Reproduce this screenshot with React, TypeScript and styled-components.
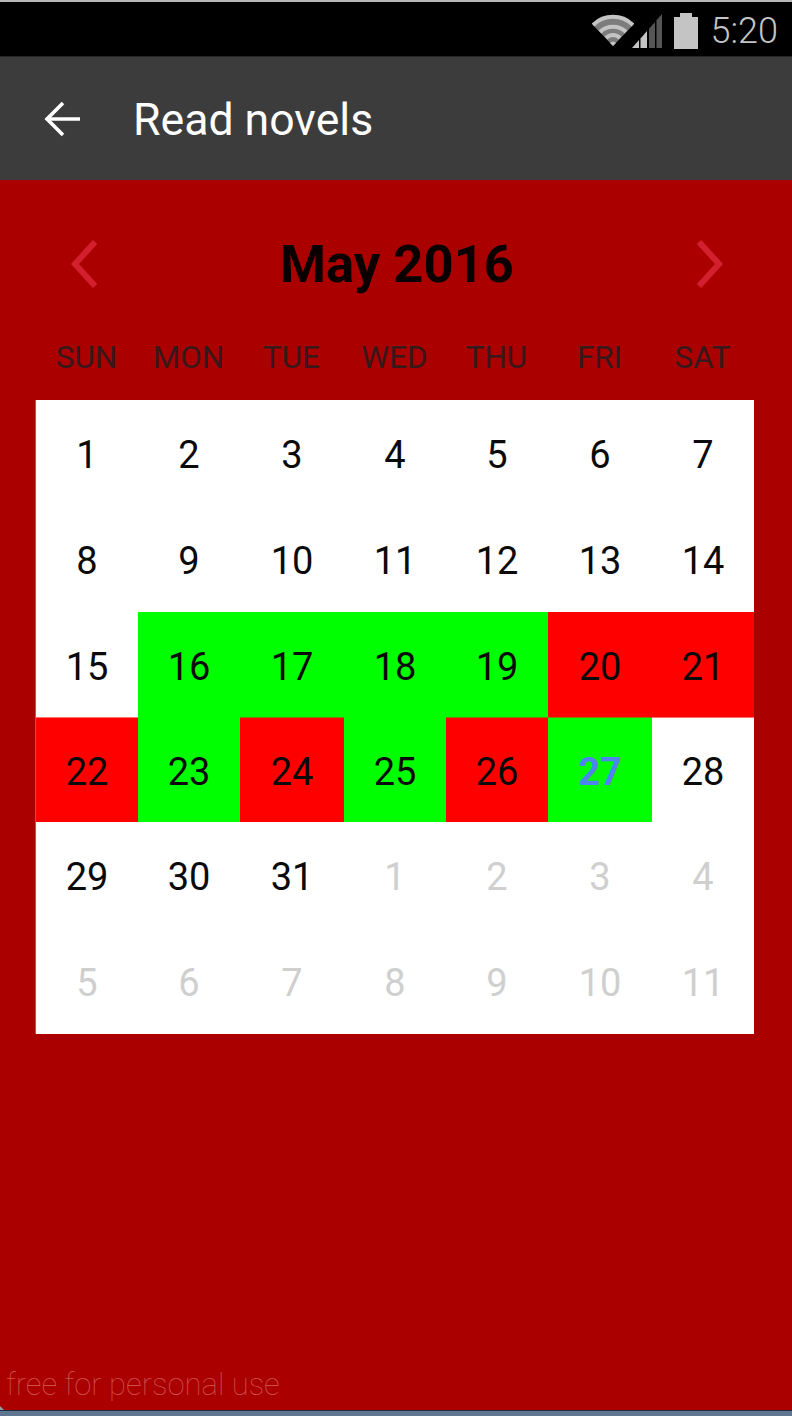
import React from "react";
import styled, { createGlobalStyle } from "styled-components";

const Global = createGlobalStyle`
  html, body { margin: 0; padding: 0; background: #a00; }
  body { font-family: Roboto, "Liberation Sans", sans-serif; }
`;

const Screen = styled.div`
  width: 792px;
  height: 1416px;
  display: flex;
  flex-direction: column;
  background: #aa0000;
  overflow: hidden;
`;

const StatusBar = styled.div`
  height: 54px;
  border-top: 2px solid #b8b8b8;
  border-bottom: 1px solid #262626;
  background: #000;
  display: flex;
  align-items: center;
  justify-content: flex-end;
  padding-right: 14px;
`;

const Clock = styled.span`
  font-size: 36px;
  font-weight: 300;
  color: #c4c4c4;
  margin-left: 13px;
  line-height: 54px;
  position: relative;
  top: 2px;
`;

const AppBar = styled.div`
  height: 123px;
  background: #3c3c3c;
  display: flex;
  align-items: center;
  padding-left: 44px;
  gap: 53px;
  color: #fff;
`;

const AppTitle = styled.span`
  font-size: 44.6px;
  font-weight: 400;
  color: #fff;
  padding-top: 2px;
`;

const Body = styled.div`
  flex: 1;
  display: flex;
  flex-direction: column;
  padding: 0 38px 0 36px;
  position: relative;
`;

const MonthRow = styled.div`
  height: 168px;
  display: flex;
  align-items: center;
  justify-content: space-between;
  padding: 0 31px 0 35px;
  box-sizing: border-box;
`;

const MonthTitle = styled.h1`
  margin: 0;
  font-family: Roboto, "Liberation Sans", sans-serif;
  font-size: 52.6px;
  font-weight: 700;
  color: #0a0000;
`;

const columns = "102px 102px 104px 102px 102px 104px 102px";

const WeekRow = styled.div`
  display: grid;
  grid-template-columns: ${columns};
  height: 52px;
`;

const WeekDay = styled.span`
  text-align: center;
  font-size: 31.4px;
  line-height: 20px;
  padding-right: 1px;
  color: #38181a;
  font-weight: 400;
`;

const Grid = styled.div`
  display: grid;
  grid-template-columns: ${columns};
  grid-template-rows: 106px 106px 105px 105px 106px 106px;
  height: 634px;
  background: #fff;
  box-shadow: -1px 0 0 #c94a4a;
`;

type Kind = "plain" | "muted" | "good" | "bad" | "today";

const Cell = styled.div<{ $kind: Kind; $seam?: string }>`
  display: flex;
  align-items: center;
  justify-content: center;
  font-size: 38px;
  padding-top: 4px;
  box-sizing: border-box;
  font-weight: ${(p) => (p.$kind === "today" ? 700 : 400)};
  color: ${(p) =>
    p.$kind === "muted" ? "#cfcfcf" : p.$kind === "today" ? "#4f83f0" : "#0a0a0a"};
  background: ${(p) =>
    p.$kind === "good" || p.$kind === "today"
      ? "#00ff00"
      : p.$kind === "bad"
        ? "#ff0000"
        : "#ffffff"};
  box-shadow: ${(p) => (p.$seam ? `inset 0 1px 0 ${p.$seam}` : "none")};
`;

const Watermark = styled.div`
  position: absolute;
  left: 6px;
  bottom: 13px;
  font-size: 31px;
  font-weight: 100;
  color: #dc6a6a;
  opacity: 0.75;
`;

const BottomEdge = styled.div`
  position: absolute;
  left: 0;
  right: 0;
  bottom: 0;
  height: 6px;
  background: #5f7690;
  border-top: 1px solid #1f2d45;
  box-sizing: border-box;
`;

const CornerNotch = styled.div`
  position: absolute;
  left: 0;
  bottom: 6px;
  width: 0;
  height: 0;
  border-left: 4px solid #8fa0a8;
  border-top: 4px solid transparent;
`;

const weeks = ["SUN", "MON", "TUE", "WED", "THU", "FRI", "SAT"];

const good = [16, 17, 18, 19, 23, 25];
const bad = [20, 21, 22, 24, 26];

const seams: Record<number, string> = {
  22: "#ff7070",
  24: "#808000",
  26: "#808000",
  27: "#808000",
  28: "#ff7070",
};

const days: { n: number; kind: Kind; seam?: string }[] = [
  ...Array.from({ length: 31 }, (_, i) => {
    const n = i + 1;
    const kind: Kind = n === 27 ? "today" : good.includes(n) ? "good" : bad.includes(n) ? "bad" : "plain";
    return { n, kind, seam: seams[n] };
  }),
  ...Array.from({ length: 11 }, (_, i) => ({ n: i + 1, kind: "muted" as Kind })),
];

const Wifi = () => (
  <svg width="42" height="34" viewBox="0 0 42 34" fill="none" style={{ marginTop: 2 }}>
    <path d="M1 12 C12 1 30 1 41 12 L21 33 Z" fill="#7c7c7c" />
    <path d="M1 12 C12 1 30 1 41 12" stroke="#c4c4c4" strokeWidth="4" />
    <path d="M8 19 C15 12 27 12 34 19" stroke="#c4c4c4" strokeWidth="4" />
    <path d="M14 25 C18 21 24 21 28 25" stroke="#c4c4c4" strokeWidth="4" />
    <path d="M18 30 L21 33 L24 30 C22 28 20 28 18 30 Z" fill="#c4c4c4" />
  </svg>
);

const Signal = () => (
  <svg width="30" height="34" viewBox="0 0 30 34" style={{ marginLeft: -2, marginTop: 4 }}>
    <path d="M0 34 L7 26 L7 34 Z" fill="#c4c4c4" />
    <path d="M8.5 24.4 L15 17 L15 34 L8.5 34 Z" fill="#c4c4c4" />
    <path d="M17 14.7 L23 8 L23 34 L17 34 Z" fill="#555" />
    <path d="M24.5 6.2 L30 0 L30 34 L24.5 34 Z" fill="#555" />
  </svg>
);

const Battery = () => (
  <svg width="24" height="36" viewBox="0 0 24 36" style={{ marginLeft: 12, marginTop: 3 }}>
    <path d="M6 0 H18 V4 H24 V36 H0 V4 H6 Z" fill="#c4c4c4" />
  </svg>
);

const BackArrow = () => (
  <svg width="36" height="36" viewBox="0 0 36 36" fill="none" stroke="#fff" strokeWidth="3.6">
    <path d="M36 18 H3" />
    <path d="M19 2 L3 18 L19 34" />
  </svg>
);

const Chevron = ({ dir }: { dir: "left" | "right" }) => (
  <svg width="26" height="48" viewBox="0 0 26 48" fill="none" stroke="#d3202e" strokeWidth="6">
    <path d={dir === "left" ? "M24 2 L4 24 L24 46" : "M2 2 L22 24 L2 46"} />
  </svg>
);

export default function App() {
  return (
    <Screen>
      <Global />
      <StatusBar>
        <Wifi />
        <Signal />
        <Battery />
        <Clock>5:20</Clock>
      </StatusBar>
      <AppBar>
        <BackArrow />
        <AppTitle>Read novels</AppTitle>
      </AppBar>
      <Body>
        <MonthRow>
          <Chevron dir="left" />
          <MonthTitle>May 2016</MonthTitle>
          <Chevron dir="right" />
        </MonthRow>
        <WeekRow>
          {weeks.map((w) => (
            <WeekDay key={w}>{w}</WeekDay>
          ))}
        </WeekRow>
        <Grid>
          {days.map((d, i) => (
            <Cell key={i} $kind={d.kind} $seam={d.seam}>
              {d.n}
            </Cell>
          ))}
        </Grid>
        <Watermark>free for personal use</Watermark>
        <CornerNotch />
        <BottomEdge />
      </Body>
    </Screen>
  );
}
